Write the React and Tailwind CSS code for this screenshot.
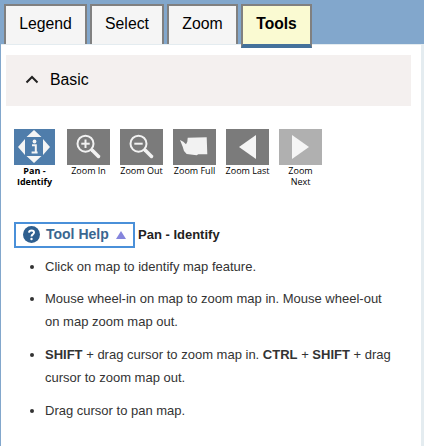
import React from 'react';

const TABS = [
  { label: 'Legend', width: 'w-[83px]' },
  { label: 'Select', width: 'w-[74px]' },
  { label: 'Zoom', width: 'w-[71px]' },
];

const ZoomGlass = ({ minus }) => (
  <svg viewBox="0 0 43 36" className="w-[43px] h-[36px]">
    <circle cx="18.5" cy="14.7" r="8" fill="none" stroke="#f2f2f2" strokeWidth="2" />
    <path d="M25 21 L31.5 27.5" stroke="#f2f2f2" strokeWidth="3.5" strokeLinecap="round" />
    <path d="M14.3 14.7 H22.7" stroke="#f2f2f2" strokeWidth="2" />
    {!minus && <path d="M18.5 10.5 V19" stroke="#f2f2f2" strokeWidth="2" />}
  </svg>
);

const PanIcon = () => (
  <svg viewBox="0 0 41 36" className="w-[41px] h-[36px]">
    <path d="M20 1 L27.5 8 H12.5 Z M20 34 L27.5 27 H12.5 Z M4 18 L11 10 V26 Z M36 18 L29 10 V26 Z" fill="#f5f5f5" />
    <circle cx="20.5" cy="12.5" r="1.9" fill="#f5f5f5" />
    <path d="M18 16.2 H21.8 V23 M17.6 23.4 H23.6" stroke="#f5f5f5" strokeWidth="2" fill="none" />
  </svg>
);

const StateIcon = () => (
  <svg viewBox="0 0 43 36" className="w-[43px] h-[36px]">
    <path d="M7 11 L10.3 12.7 L13 15.3 L14.3 12.7 L14.7 8.7 L33.7 8.3 L34.3 25.3 L25.3 25.3 L23.7 26.3 L13.7 25 L11 22 L9.7 17.7 Z" fill="#f2f2f2" />
  </svg>
);

const TOOLS = [
  { label: 'Pan -\nIdentify', width: 'w-[41px]', bg: 'bg-[#4f7dab]', bold: true, icon: <PanIcon /> },
  { label: 'Zoom In', width: 'w-[43px]', bg: 'bg-[#7b7b7b]', icon: <ZoomGlass /> },
  { label: 'Zoom Out', width: 'w-[43px]', bg: 'bg-[#7b7b7b]', icon: <ZoomGlass minus /> },
  { label: 'Zoom Full', width: 'w-[43px]', bg: 'bg-[#7b7b7b]', icon: <StateIcon /> },
  {
    label: 'Zoom Last', width: 'w-[43px]', bg: 'bg-[#7b7b7b]',
    icon: <svg viewBox="0 0 43 36" className="w-[43px] h-[36px]"><path d="M13 18 L30 6 V30 Z" fill="#f5f5f5" /></svg>,
  },
  {
    label: 'Zoom\nNext', width: 'w-[43px]', bg: 'bg-[#b0b0b0]',
    icon: <svg viewBox="0 0 43 36" className="w-[43px] h-[36px]"><path d="M30 18 L13 6 V30 Z" fill="#f5f5f5" /></svg>,
  },
];

export default function App() {
  return (
    <div className="w-[424px] h-[446px] overflow-hidden bg-[#82a7cc] flex flex-col font-['Liberation_Sans',Arial,sans-serif] text-black">
      {/* Tabs */}
      <div className="flex gap-[3px] pl-[4px] pt-[4px] h-[44px] flex-shrink-0 relative z-10">
        {TABS.map(tab => (
          <div key={tab.label} className={`${tab.width} h-[40px] pb-[2px] bg-[#f5f5f5] border-2 border-b-0 border-[#808080] flex items-center justify-center text-[15.8px]`}>
            {tab.label}
          </div>
        ))}
        <div className="w-[71px] h-[44px] pb-[2px] bg-[#fafad2] border-2 border-b-4 border-[#808080] border-b-[#44719b] flex items-center justify-center text-[15.6px] font-bold">
          Tools
        </div>
      </div>

      {/* Content */}
      <div className="flex-1 ml-[1px] bg-white border-t border-r-[3px] border-[#e4ecf0]">
        <div className="mt-[10px] ml-[5px] w-[405px] h-[51px] pb-[2px] bg-[#f4f0ef] flex items-center pl-[19px] gap-[11px] text-[15.8px]">
          <svg viewBox="0 0 14 9" className="w-[14px] h-[9px]">
            <path d="M1.5 7.5 L7 2 L12.5 7.5" fill="none" stroke="#222" strokeWidth="2" />
          </svg>
          Basic
        </div>

        {/* Tool buttons */}
        <div className="flex gap-[10px] mt-[23px] ml-[13px]">
          {TOOLS.map((tool, i) => (
            <div key={tool.label} className={`${tool.width} flex flex-col items-center ${i === 0 ? 'mr-[2px]' : ''}`}>
              <div className={`${tool.width} h-[36px] ${tool.bg}`}>{tool.icon}</div>
              <div className={`text-center text-[9px] leading-[11px] font-['Open_Sans',sans-serif] whitespace-pre ${tool.bold ? 'font-bold' : ''}`}>
                {tool.label}
              </div>
            </div>
          ))}
        </div>

        {/* Help */}
        <div className="flex items-center mt-[35px] ml-[13px]">
          <div className="w-[121px] h-[26px] pb-[1px] border-2 border-[#4a90d9] flex items-center pl-[7px] gap-[6px] text-[14px] font-bold text-[#3a6690]">
            <svg viewBox="0 0 16 16" className="w-[17px] h-[17px] flex-shrink-0">
              <circle cx="8" cy="8" r="8" fill="#2f5f8f" />
              <path d="M5.6 6.2 C5.8 3.6 10.4 3.6 10.4 6.2 C10.4 8 8 7.8 8 9.8" fill="none" stroke="#fff" strokeWidth="1.8" />
              <circle cx="8" cy="12.2" r="1.1" fill="#fff" />
            </svg>
            Tool Help
            <svg viewBox="0 0 10 8" className="w-[10px] h-[8px] ml-[1px]">
              <path d="M5 0 L10 8 H0 Z" fill="#8585dd" />
            </svg>
          </div>
          <span className="ml-[3px] text-[13px] font-bold text-[#222]">Pan - Identify</span>
        </div>

        <ul className="mt-[7px] ml-[44px] w-[352px] list-disc text-[13px] leading-[23px] text-[#333]">
          <li className="mb-[9px]">Click on map to identify map feature.</li>
          <li className="mb-[10px]">Mouse wheel-in on map to zoom map in. Mouse wheel-out on map zoom map out.</li>
          <li className="mb-[10px]"><b className="font-semibold">SHIFT</b> + drag cursor to zoom map in. <b className="font-semibold">CTRL</b> + <b className="font-semibold">SHIFT</b> + drag cursor to zoom map out.</li>
          <li>Drag cursor to pan map.</li>
        </ul>
      </div>
    </div>
  );
}
